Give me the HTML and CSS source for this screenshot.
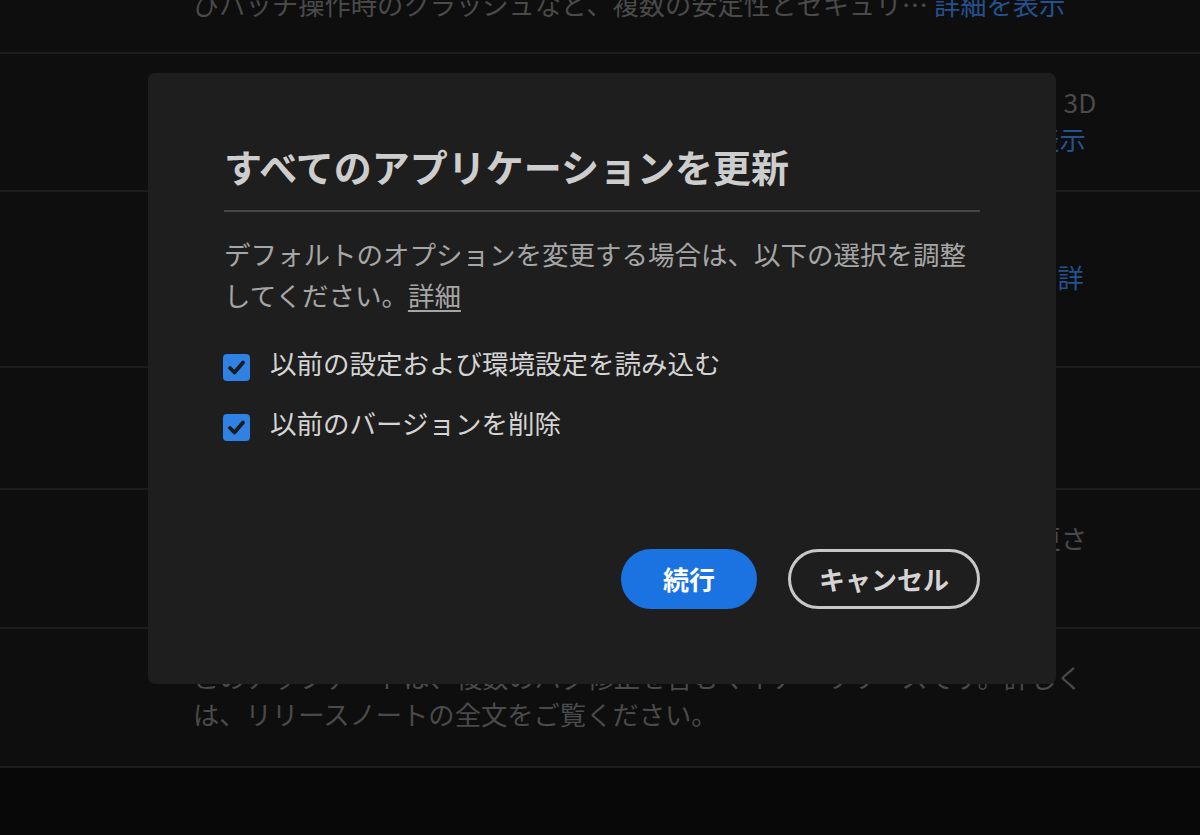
FILE: index.html
```html
<!DOCTYPE html>
<html lang="ja">
<head>
<meta charset="utf-8">
<title>すべてのアプリケーションを更新</title>
<link rel="stylesheet" href="styles.css">
</head>
<body>
<main class="list">
  <section class="item item-first">
    <p class="note"><span class="line">びバッチ操作時のクラッシュなど、複数の安定性とセキュリ… <span class="link">詳細を表示</span></span></p>
  </section>
  <section class="item item-tight">
    <p class="note">
      <span class="line">このリリースでは、新機能の追加とパフォーマンスの向上に加えて新しい 3D</span>
      <span class="line">サポートが追加されたほか、複数の不具合が修正されています…<span class="link">詳細を表示</span></span>
    </p>
  </section>
  <section class="item">
    <p class="note">
      <span class="line">このアップデートには、パフォーマンスの向上と新しいツールが</span>
      <span class="line">含まれています。また、安定性に関する複数の問題が修正されました。…<span class="link">詳</span></span>
      <span class="line"><span class="link">細を表示</span></span>
    </p>
  </section>
  <section class="item item-single">
    <p class="note"><span class="line">デスクトップアプリケーションの最新バージョンです。</span></p>
  </section>
  <section class="item">
    <p class="note">
      <span class="line">ファイルの読み込みと書き出しに関する不具合を修正し、表示方法が変更さ</span>
      <span class="line">れました。… <span class="link">詳細を表示</span></span>
    </p>
  </section>
  <section class="item">
    <p class="note">
      <span class="line">このアップデートは、複数のバグ修正を含むマイナーリリースです。詳しく</span>
      <span class="line">は、リリースノートの全文をご覧ください。</span>
    </p>
  </section>
</main>

<div class="dialog" role="dialog" aria-labelledby="dialog-title">
  <h1 class="dialog-title" id="dialog-title">すべてのアプリケーションを更新</h1>
  <div class="divider"></div>
  <p class="desc">デフォルトのオプションを変更する場合は、以下の選択を調整してください。<a href="#" class="desc-link">詳細</a></p>
  <ul class="options">
    <li class="option">
      <span class="checkbox"><svg viewBox="0 0 27 27" width="27" height="27"><path d="M7 14 L11.5 18.5 L20 8.5" fill="none" stroke="#1c1c1c" stroke-width="3.8" stroke-linecap="round" stroke-linejoin="round"/></svg></span>
      <span class="option-label">以前の設定および環境設定を読み込む</span>
    </li>
    <li class="option">
      <span class="checkbox"><svg viewBox="0 0 27 27" width="27" height="27"><path d="M7 14 L11.5 18.5 L20 8.5" fill="none" stroke="#1c1c1c" stroke-width="3.8" stroke-linecap="round" stroke-linejoin="round"/></svg></span>
      <span class="option-label">以前のバージョンを削除</span>
    </li>
  </ul>
  <div class="actions">
    <button class="btn btn-primary" type="button">続行</button>
    <button class="btn btn-secondary" type="button">キャンセル</button>
  </div>
</div>
</body>
</html>
```
FILE: styles.css
```css
html, body {
  margin: 0;
  padding: 0;
}

body {
  position: relative;
  height: 835px;
  overflow: hidden;
  background: #080808;
  font-family: "Noto Sans CJK JP", "Noto Sans", sans-serif;
}

.list {
  display: flex;
  flex-direction: column;
}

.item {
  background: #0e0e0e;
  border-bottom: 2px solid #1c1c1c;
  padding: 29px 0 34px 193px;
}

.item-first {
  padding-top: 0;
  padding-bottom: 30px;
}

.item-first .note {
  margin-top: -15px;
}

.item-tight {
  padding-bottom: 33px;
}

.item-single {
  padding-bottom: 54px;
}

.note {
  margin: 0;
  font-size: 26.3px;
  line-height: 37px;
  color: #4a4a4a;
  white-space: nowrap;
}

.note .line {
  display: block;
}

.link {
  color: #24528f;
}

/* Modal dialog */
.dialog {
  position: absolute;
  left: 148px;
  top: 73px;
  width: 908px;
  height: 611px;
  box-sizing: border-box;
  padding: 71px 76px 75px;
  background: #1e1e1e;
  border-radius: 7px;
  display: flex;
  flex-direction: column;
}

.dialog-title {
  margin: 0;
  font-size: 38px;
  line-height: 44px;
  font-weight: 700;
  color: #cdcdcd;
}

.divider {
  height: 2px;
  background: #464646;
  margin-top: 22px;
}

.desc {
  margin: 21px 0 0;
  font-size: 26.5px;
  line-height: 41px;
  color: #a6a6a6;
}

.desc-link {
  color: inherit;
  text-decoration: underline;
  text-decoration-thickness: 1.5px;
  text-underline-offset: 4px;
}

.options {
  list-style: none;
  margin: 30px 0 0;
  padding: 0;
  display: flex;
  flex-direction: column;
  gap: 24px;
}

.option {
  display: flex;
  align-items: flex-start;
  gap: 20px;
  font-size: 26.5px;
  line-height: 36px;
  color: #d4d4d4;
}

.checkbox {
  flex: none;
  width: 27px;
  height: 27px;
  margin-top: 9px;
  margin-left: -1px;
  border-radius: 4px;
  background: #2f82e4;
  display: flex;
  align-items: center;
  justify-content: center;
}

.checkbox svg {
  display: block;
}

.actions {
  margin-top: auto;
  display: flex;
  justify-content: flex-end;
  gap: 31px;
}

.btn {
  height: 60px;
  min-width: 136px;
  box-sizing: border-box;
  padding: 0 28px;
  border-radius: 30px;
  border: 3px solid transparent;
  font-family: "Noto Sans CJK JP", "Noto Sans", sans-serif;
  font-size: 26px;
  font-weight: 700;
  line-height: 1;
  display: flex;
  align-items: center;
  justify-content: center;
  cursor: pointer;
}

.btn-primary {
  background: #1b73e2;
  border-color: #1b73e2;
  color: #ffffff;
}

.btn-secondary {
  background: transparent;
  border-color: #c8c8c8;
  color: #d4d4d4;
}
```
